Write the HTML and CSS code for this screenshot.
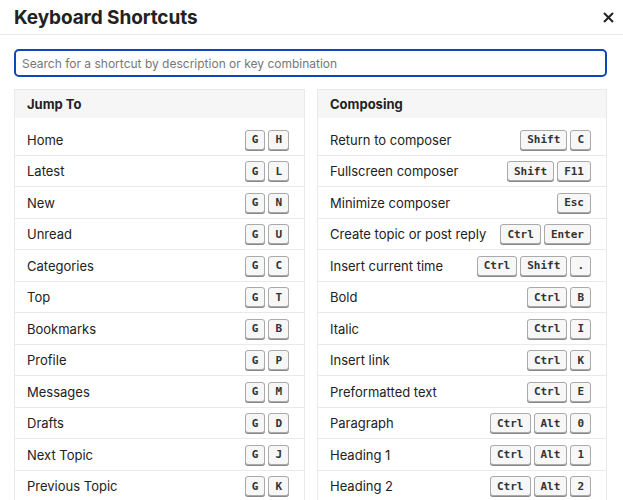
FILE: index.html
```html
<!DOCTYPE html>
<html lang="en">
<head>
    <meta charset="UTF-8">
    <meta name="viewport" content="width=device-width, initial-scale=1.0">
    <title>Keyboard Shortcuts</title>
    <link rel="stylesheet" href="styles.css">
</head>
<body>
    <div class="modal">
        <div class="modal-header">
            <h1>Keyboard Shortcuts</h1>
            <button class="close" aria-label="Close">
                <svg width="11" height="11" viewBox="0 0 11 11"><path d="M1 1L10 10M10 1L1 10" stroke="#222" stroke-width="2"/></svg>
            </button>
        </div>
        <div class="modal-body">
            <input class="search" type="text" placeholder="Search for a shortcut by description or key combination" autofocus>
            <div class="columns">
                <section class="group">
                    <h2>Jump To</h2>
                    <ul>
                        <li>Home <span class="keys"><kbd>G</kbd><kbd>H</kbd></span></li>
                        <li>Latest <span class="keys"><kbd>G</kbd><kbd>L</kbd></span></li>
                        <li>New <span class="keys"><kbd>G</kbd><kbd>N</kbd></span></li>
                        <li>Unread <span class="keys"><kbd>G</kbd><kbd>U</kbd></span></li>
                        <li>Categories <span class="keys"><kbd>G</kbd><kbd>C</kbd></span></li>
                        <li>Top <span class="keys"><kbd>G</kbd><kbd>T</kbd></span></li>
                        <li>Bookmarks <span class="keys"><kbd>G</kbd><kbd>B</kbd></span></li>
                        <li>Profile <span class="keys"><kbd>G</kbd><kbd>P</kbd></span></li>
                        <li>Messages <span class="keys"><kbd>G</kbd><kbd>M</kbd></span></li>
                        <li>Drafts <span class="keys"><kbd>G</kbd><kbd>D</kbd></span></li>
                        <li>Next Topic <span class="keys"><kbd>G</kbd><kbd>J</kbd></span></li>
                        <li>Previous Topic <span class="keys"><kbd>G</kbd><kbd>K</kbd></span></li>
                    </ul>
                </section>
                <section class="group">
                    <h2>Composing</h2>
                    <ul>
                        <li>Return to composer <span class="keys"><kbd>Shift</kbd><kbd>C</kbd></span></li>
                        <li>Fullscreen composer <span class="keys"><kbd>Shift</kbd><kbd>F11</kbd></span></li>
                        <li>Minimize composer <span class="keys"><kbd>Esc</kbd></span></li>
                        <li>Create topic or post reply <span class="keys"><kbd>Ctrl</kbd><kbd>Enter</kbd></span></li>
                        <li>Insert current time <span class="keys"><kbd>Ctrl</kbd><kbd>Shift</kbd><kbd>.</kbd></span></li>
                        <li>Bold <span class="keys"><kbd>Ctrl</kbd><kbd>B</kbd></span></li>
                        <li>Italic <span class="keys"><kbd>Ctrl</kbd><kbd>I</kbd></span></li>
                        <li>Insert link <span class="keys"><kbd>Ctrl</kbd><kbd>K</kbd></span></li>
                        <li>Preformatted text <span class="keys"><kbd>Ctrl</kbd><kbd>E</kbd></span></li>
                        <li>Paragraph <span class="keys"><kbd>Ctrl</kbd><kbd>Alt</kbd><kbd>0</kbd></span></li>
                        <li>Heading 1 <span class="keys"><kbd>Ctrl</kbd><kbd>Alt</kbd><kbd>1</kbd></span></li>
                        <li>Heading 2 <span class="keys"><kbd>Ctrl</kbd><kbd>Alt</kbd><kbd>2</kbd></span></li>
                    </ul>
                </section>
            </div>
        </div>
    </div>
</body>
</html>
```

FILE: styles.css
```css
body {
    margin: 0;
    padding: 0;
    background: white;
    color: #222;
    font-family: Inter, "Noto Sans", sans-serif;
    height: 100vh;
    overflow: hidden;
}
.modal-header {
    display: flex;
    justify-content: space-between;
    align-items: center;
    height: 34px;
    padding: 0 5px 0 14px;
    border-bottom: 1px solid #e9e9e9;
}
.modal-header h1 {
    margin: 0;
    font-size: 19px;
    font-weight: 700;
    letter-spacing: -0.1px;
}
.close {
    display: flex;
    padding: 0 4px;
    background: none;
    border: none;
    cursor: pointer;
}
.modal-body {
    padding: 14px 16px 0 14px;
}
.search {
    display: block;
    width: 100%;
    box-sizing: border-box;
    height: 28px;
    padding: 0 6px;
    border: 2px solid #0f47b8;
    border-radius: 5px;
    font-family: Inter, sans-serif;
    font-size: 12px;
    color: #222;
    outline: none;
}
.search::placeholder {
    color: #777;
}
.columns {
    display: grid;
    grid-template-columns: 291px 1fr;
    gap: 12px;
    margin-top: 12px;
}
.group {
    border: 1px solid #e9e9e9;
}
.group h2 {
    margin: 0;
    height: 28px;
    line-height: 28px;
    padding: 0 12px;
    background: #f6f6f6;
    font-size: 13px;
    font-weight: 700;
}
.group ul {
    list-style: none;
    margin: 0;
    padding: 6px 0 0;
}
.group li {
    display: flex;
    justify-content: space-between;
    align-items: center;
    height: 31.5px;
    box-sizing: border-box;
    padding: 1px 15px 0 12px;
    border-bottom: 1px solid #e9e9e9;
    font-size: 13px;
}
.keys {
    display: flex;
    gap: 3px;
}
kbd {
    display: inline-flex;
    align-items: center;
    justify-content: center;
    height: 20px;
    min-width: 20px;
    box-sizing: border-box;
    padding: 0 6px;
    background: #f7f7f7;
    border: 1px solid #aaa;
    border-radius: 3px;
    box-shadow: 0 1px 0 #888;
    font-family: "DejaVu Sans Mono", monospace;
    font-weight: bold;
    font-size: 11px;
    color: #333;
}
```
